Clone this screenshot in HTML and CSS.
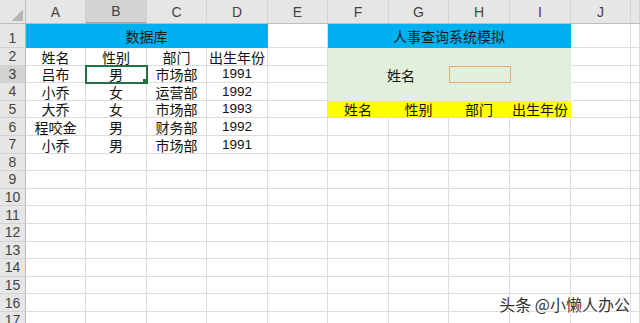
FILE: index.html
```html
<!DOCTYPE html>
<html lang="zh-CN">
<head>
    <meta charset="UTF-8">
    <meta name="viewport" content="width=device-width, initial-scale=1.0">
    <title>人事查询系统模拟</title>
    <link rel="stylesheet" href="styles.css">
</head>
<body>
    <div class="sheet">
        <table class="grid">
            <colgroup>
                <col class="col-head">
                <col class="w60"><col class="w61"><col class="w60"><col class="w61"><col class="w60">
                <col class="w61"><col class="w60"><col class="w61"><col class="w61"><col class="w60">
                <col class="col-rest">
            </colgroup>
            <thead>
                <tr class="letters">
                    <th class="corner"></th>
                    <th>A</th><th class="sel">B</th><th>C</th><th>D</th><th>E</th>
                    <th>F</th><th>G</th><th>H</th><th>I</th><th>J</th><th></th>
                </tr>
            </thead>
            <tbody>
                <tr class="title-row">
                    <th>1</th>
                    <td colspan="4" class="blue">数据库</td>
                    <td></td>
                    <td colspan="4" class="blue">人事查询系统模拟</td>
                    <td></td><td></td>
                </tr>
                <tr>
                    <th>2</th>
                    <td>姓名</td><td>性别</td><td>部门</td><td>出生年份</td><td></td>
                    <td colspan="4" rowspan="3" class="green">
                        <div class="query">
                            <span class="query-label">姓名</span>
                            <span class="query-input"></span>
                        </div>
                    </td>
                    <td></td><td></td>
                </tr>
                <tr>
                    <th class="sel">3</th>
                    <td>吕布</td><td class="active">男</td><td>市场部</td><td class="num">1991</td><td></td>
                    <td></td><td></td>
                </tr>
                <tr>
                    <th>4</th>
                    <td>小乔</td><td>女</td><td>运营部</td><td class="num">1992</td><td></td>
                    <td></td><td></td>
                </tr>
                <tr>
                    <th>5</th>
                    <td>大乔</td><td>女</td><td>市场部</td><td class="num">1993</td><td></td>
                    <td class="yellow">姓名</td><td class="yellow">性别</td><td class="yellow">部门</td><td class="yellow">出生年份</td>
                    <td></td><td></td>
                </tr>
                <tr>
                    <th>6</th>
                    <td>程咬金</td><td>男</td><td>财务部</td><td class="num">1992</td>
                    <td></td><td></td><td></td><td></td><td></td><td></td><td></td>
                </tr>
                <tr>
                    <th>7</th>
                    <td>小乔</td><td>男</td><td>市场部</td><td class="num">1991</td>
                    <td></td><td></td><td></td><td></td><td></td><td></td><td></td>
                </tr>
                <tr><th>8</th><td></td><td></td><td></td><td></td><td></td><td></td><td></td><td></td><td></td><td></td><td></td></tr>
                <tr><th>9</th><td></td><td></td><td></td><td></td><td></td><td></td><td></td><td></td><td></td><td></td><td></td></tr>
                <tr><th>10</th><td></td><td></td><td></td><td></td><td></td><td></td><td></td><td></td><td></td><td></td><td></td></tr>
                <tr><th>11</th><td></td><td></td><td></td><td></td><td></td><td></td><td></td><td></td><td></td><td></td><td></td></tr>
                <tr><th>12</th><td></td><td></td><td></td><td></td><td></td><td></td><td></td><td></td><td></td><td></td><td></td></tr>
                <tr><th>13</th><td></td><td></td><td></td><td></td><td></td><td></td><td></td><td></td><td></td><td></td><td></td></tr>
                <tr><th>14</th><td></td><td></td><td></td><td></td><td></td><td></td><td></td><td></td><td></td><td></td><td></td></tr>
                <tr><th>15</th><td></td><td></td><td></td><td></td><td></td><td></td><td></td><td></td><td></td><td></td><td></td></tr>
                <tr><th>16</th><td></td><td></td><td></td><td></td><td></td><td></td><td></td><td></td><td></td><td></td><td></td></tr>
                <tr><th>17</th><td></td><td></td><td></td><td></td><td></td><td></td><td></td><td></td><td></td><td></td><td></td></tr>
            </tbody>
        </table>

        <div class="watermark">头条 @小懒人办公</div>
    </div>
</body>
</html>
```

FILE: styles.css
```css
* {
    margin: 0;
    padding: 0;
    box-sizing: border-box;
}

body {
    width: 640px;
    height: 323px;
    overflow: hidden;
    background: #fff;
    font-family: "Noto Sans CJK SC", "Liberation Sans", sans-serif;
    color: #111;
}

.sheet {
    position: relative;
    width: 640px;
    height: 323px;
    overflow: hidden;
}

.grid {
    width: 640px;
    table-layout: fixed;
    border-collapse: separate;
    border-spacing: 0;
}

.col-head { width: 26px; }
.w60 { width: 60px; }
.w61 { width: 61px; }
.col-rest { width: 9px; }

/* column letters */
.letters th {
    height: 24px;
    background: #e6e6e6;
    border-right: 1px solid #d2d2d2;
    border-bottom: 1px solid #bcbcbc;
    font-family: "Liberation Sans", sans-serif;
    font-weight: normal;
    font-size: 14px;
    color: #444;
    text-align: center;
    vertical-align: middle;
}

.letters th.sel {
    background: #d3d3d3;
    border-bottom: 2px solid #a9a9a9;
}

.letters th.corner {
    background: #e6e6e6 linear-gradient(135deg, transparent 50%, #b5b5b5 50%) no-repeat right 2px bottom 2px / 11px 11px;
    border-right: 1px solid #bcbcbc;
}

/* row numbers */
tbody th {
    height: 17.6px;
    background: #e6e6e6;
    border-right: 1px solid #bcbcbc;
    border-bottom: 1px solid #d2d2d2;
    font-family: "Liberation Sans", sans-serif;
    font-weight: normal;
    font-size: 14px;
    line-height: 16px;
    color: #444;
    text-align: center;
}

tbody th.sel {
    background: #d3d3d3;
}

.title-row th {
    height: 24px;
    vertical-align: bottom;
    padding-bottom: 1px;
}

td {
    border-right: 1px solid #dcdcdc;
    border-bottom: 1px solid #dcdcdc;
    font-size: 14px;
    line-height: 16px;
    text-align: center;
    vertical-align: bottom;
    white-space: nowrap;
    overflow: hidden;
}

td.num {
    font-family: "Liberation Sans", sans-serif;
    font-size: 13.5px;
}

.blue {
    background: #00b0f0;
    border-color: #00b0f0;
    vertical-align: middle;
    color: #1a1a1a;
}

.green {
    background: #e2efda;
    border-color: #e2efda;
    vertical-align: top;
}

.yellow {
    background: #ffff00;
    border-color: #ffff00;
}

.query {
    display: grid;
    grid-template-columns: 59px 62px 62px 1fr;
    grid-template-rows: 18px 17px;
}

.query-label {
    grid-column: 2;
    grid-row: 2;
    text-align: left;
    line-height: 18px;
}

.query-input {
    grid-column: 3;
    grid-row: 2;
    border: 1px solid #eca676;
}

/* active cell B3 */
td.active {
    position: relative;
    outline: 2px solid #217346;
    outline-offset: -1px;
}

td.active::after {
    content: '';
    position: absolute;
    right: -3px;
    bottom: -3px;
    width: 5px;
    height: 5px;
    background: #217346;
    border: 1px solid #fff;
}

.watermark {
    position: absolute;
    right: 10px;
    bottom: 7px;
    font-size: 16px;
    color: #333;
    text-shadow: 0 0 2px #fff, 0 0 2px #fff, 1px 1px 0 #fff;
}
```
